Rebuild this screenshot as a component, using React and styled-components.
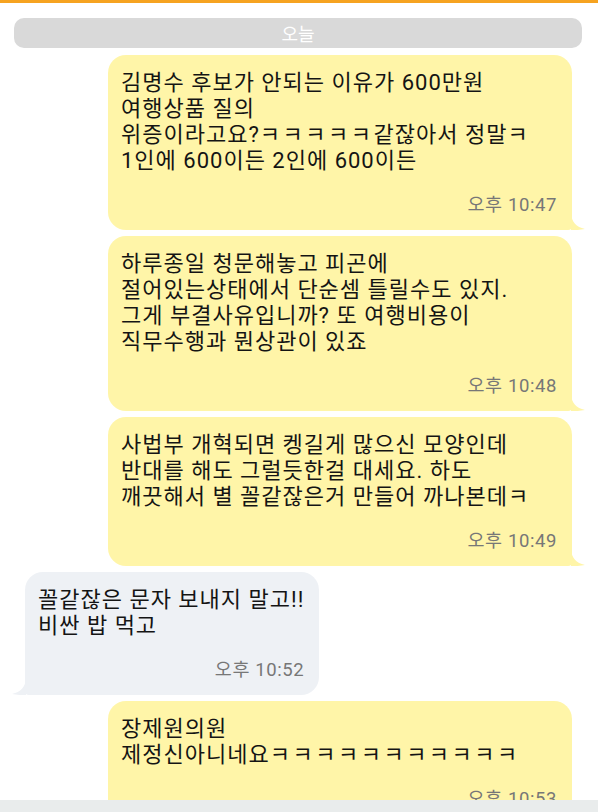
import React from "react";
import styled, { createGlobalStyle } from "styled-components";

const GlobalStyle = createGlobalStyle`
  body {
    margin: 0;
    background: #ffffff;
    font-family: Roboto, "Noto Sans CJK KR", "Noto Sans", sans-serif;
  }
`;

const Screen = styled.div`
  width: 598px;
  height: 812px;
  display: flex;
  flex-direction: column;
  overflow: hidden;
  background: #ffffff;
`;

const TopLine = styled.div`
  height: 3px;
  flex: none;
  background: #f6a320;
`;

const DatePill = styled.div`
  flex: none;
  height: 30px;
  margin: 15px 16px 0 14px;
  border-radius: 10px;
  background: #d9d9d9;
  color: #ffffff;
  font-size: 18px;
  display: flex;
  align-items: center;
  justify-content: center;
`;

const Thread = styled.div`
  flex: 1;
  min-height: 0;
  overflow: hidden;
  display: flex;
  flex-direction: column;
  gap: 6px;
  padding-top: 7px;
`;

const Bubble = styled.div`
  position: relative;
  flex: none;
  box-sizing: border-box;
  align-self: ${(p) => (p.$mine ? "flex-end" : "flex-start")};
  width: ${(p) => (p.$mine ? "464px" : "fit-content")};
  margin: ${(p) => (p.$mine ? "0 26px 0 0" : "0 0 0 25px")};
  padding: 15px 15px 14px 13px;
  border-radius: 18px;
  ${(p) =>
    p.$mine
      ? "border-bottom-right-radius: 4px;"
      : "border-bottom-left-radius: 4px;"}
  background: ${(p) => (p.$mine ? "#fff5a8" : "#eef1f5")};
`;

const Body = styled.div`
  font-size: 22px;
  letter-spacing: 1px;
  line-height: 26px;
  color: #141414;
  white-space: pre-line;
`;

const Laugh = styled.span`
  letter-spacing: 2.5px;
`;

const Time = styled.div`
  margin-top: 20px;
  font-size: 18.5px;
  letter-spacing: 0.6px;
  line-height: 22px;
  color: #777777;
  text-align: right;
`;

const Tail = styled.svg`
  position: absolute;
  bottom: 0;
  width: 14px;
  height: 16px;
  ${(p) => (p.$mine ? "right: -13px;" : "left: -13px; transform: scaleX(-1);")}
`;

const BottomBar = styled.div`
  flex: none;
  height: 12px;
  background: #e9ecec;
`;

const messages = [
  {
    mine: true,
    text: "김명수 후보가 안되는 이유가 600만원\n여행상품 질의\n위증이라고요?ㅋㅋㅋㅋㅋ같잖아서 정말ㅋ\n1인에 600이든 2인에 600이든",
    time: "오후 10:47",
  },
  {
    mine: true,
    text: "하루종일 청문해놓고 피곤에\n절어있는상태에서 단순셈 틀릴수도 있지.\n그게 부결사유입니까? 또 여행비용이\n직무수행과 뭔상관이 있죠",
    time: "오후 10:48",
  },
  {
    mine: true,
    text: "사법부 개혁되면 켕길게 많으신 모양인데\n반대를 해도 그럴듯한걸 대세요. 하도\n깨끗해서 별 꼴같잖은거 만들어 까나본데ㅋ",
    time: "오후 10:49",
  },
  {
    mine: false,
    text: "꼴같잖은 문자 보내지 말고!!\n비싼 밥 먹고",
    time: "오후 10:52",
  },
  {
    mine: true,
    text: "장제원의원\n제정신아니네요ㅋㅋㅋㅋㅋㅋㅋㅋㅋㅋㅋ",
    time: "오후 10:53",
  },
];

// runs of the ㅋ jamo are set a little wider, as in the screenshot
function renderText(text) {
  return text.split(/(ㅋ{2,})/).map((part, i) =>
    /^ㅋ{2,}$/.test(part) ? <Laugh key={i}>{part}</Laugh> : part
  );
}

function Message({ mine, text, time }) {
  return (
    <Bubble $mine={mine}>
      <Body>{renderText(text)}</Body>
      <Time>{time}</Time>
      <Tail $mine={mine} viewBox="0 0 14 16">
        <path
          d="M0 0 C1 8 5 13 14 15 C9 16 4 16 0 16 Z"
          fill={mine ? "#fff5a8" : "#eef1f5"}
        />
      </Tail>
    </Bubble>
  );
}

export default function App() {
  return (
    <>
      <GlobalStyle />
      <Screen>
        <TopLine />
        <DatePill>오늘</DatePill>
        <Thread>
          {messages.map((m, i) => (
            <Message key={i} {...m} />
          ))}
        </Thread>
        <BottomBar />
      </Screen>
    </>
  );
}
